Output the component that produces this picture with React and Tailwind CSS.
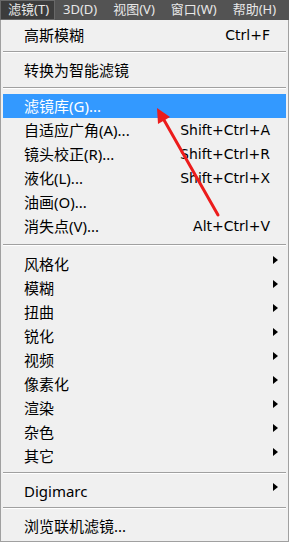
import React from "react";

const Tri = () => (
  <svg width="5" height="8" viewBox="0 0 5 8" className="block">
    <path d="M0 0 L5 4 L0 8 Z" fill="#000" />
  </svg>
);

const Item = ({ label, shortcut, sub, active }) => (
  <div
    className={
      "h-[24px] flex items-center justify-between pl-[21px] " +
      (sub ? "pr-[8px] " : "pr-[16px] ") +
      (active ? "bg-[#3399ff] text-white" : "text-black")
    }
  >
    <span className="leading-none">{label}</span>
    {shortcut && (
      <span className="leading-none font-['DejaVu_Sans',sans-serif] text-[14px]">{shortcut}</span>
    )}
    {sub && (
      <span className="self-start mt-[4px]">
        <Tri />
      </span>
    )}
  </div>
);

const Sep = ({ h, top }) => (
  <div className={"flex flex-col " + h}>
    <div className={top} />
    <div className="h-px bg-[#a0a0a0]" />
    <div className="h-px bg-white" />
  </div>
);

export default function App() {
  const bar = ["3D(D)", "视图(V)", "窗口(W)", "帮助(H)"];
  return (
    <div className="relative w-[289px] h-[542px] bg-[#f0f0f0] font-['Noto_Sans','Noto_Sans_CJK_SC',sans-serif] overflow-hidden">
      <div className="h-[20px] bg-[#535353] flex items-stretch text-[13px] text-[#e8e8e8]">
        <div className="flex items-center px-[7px] bg-[#3c3c3c] border border-[#686868] w-[55px] whitespace-nowrap">
          滤镜(T)
        </div>
        {bar.map((b) => (
          <div key={b} className="flex items-center px-[8px] whitespace-nowrap">
            {b}
          </div>
        ))}
      </div>
      <div className="h-[522px] border-x border-b border-[#a0a0a0] px-[2px] pt-[3px] text-[15px]">
        <Item label="高斯模糊" shortcut="Ctrl+F" />
        <Sep h="h-[11px]" top="h-[4px]" />
        <Item label="转换为智能滤镜" />
        <Sep h="h-[12px]" top="h-[5px]" />
        <Item label="滤镜库(G)..." active />
        <Item label="自适应广角(A)..." shortcut="Shift+Ctrl+A" />
        <Item label="镜头校正(R)..." shortcut="Shift+Ctrl+R" />
        <Item label="液化(L)..." shortcut="Shift+Ctrl+X" />
        <Item label="油画(O)..." />
        <Item label="消失点(V)..." shortcut="Alt+Ctrl+V" />
        <Sep h="h-[14px]" top="h-[6px]" />
        {["风格化", "模糊", "扭曲", "锐化", "视频", "像素化", "渲染", "杂色", "其它"].map((l) => (
          <Item key={l} label={l} sub />
        ))}
        <Sep h="h-[11px]" top="h-[4px]" />
        <Item label="Digimarc" sub />
        <Sep h="h-[11px]" top="h-[4px]" />
        <Item label="浏览联机滤镜..." />
      </div>
      <svg
        className="absolute top-0 left-0 pointer-events-none"
        width="289"
        height="542"
        viewBox="0 0 289 542"
      >
        <line x1="218" y1="215" x2="164" y2="120" stroke="#ec1c1c" strokeWidth="3" strokeLinecap="round" />
        <polygon points="157,108 170,117 158,124" fill="#ec1c1c" />
      </svg>
    </div>
  );
}
